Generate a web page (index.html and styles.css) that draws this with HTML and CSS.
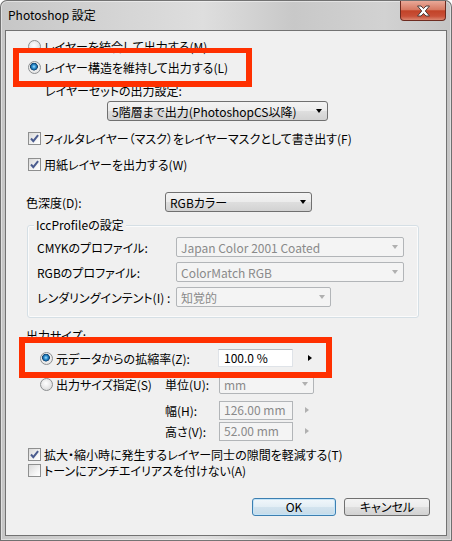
FILE: index.html
```html
<!DOCTYPE html>
<html lang="ja">
<head>
    <meta charset="UTF-8">
    <title>Photoshop 設定</title>
    <link rel="stylesheet" href="styles.css">
</head>
<body>
    <div class="window">
        <div class="titlebar">
            <span class="title">Photoshop 設定</span>
            <span class="close">
                <svg width="15" height="12" viewBox="0 0 15 12">
                    <path d="M1.5 1h3.5l2.5 2.6 2.5-2.6h3.5l-4.2 5 4.2 5h-3.5l-2.5-2.6-2.5 2.6h-3.5l4.2-5z" fill="#fff" stroke="#4a3a38" stroke-width="1"/>
                </svg>
            </span>
        </div>

        <div class="client">
            <div class="row opt"><span class="radio"></span>レイヤーを統合して出力する(M)</div>
            <div class="row opt mt1"><span class="radio on"></span>レイヤー構造を維持して出力する(L)</div>
            <div class="row set-label">レイヤーセットの出力設定:</div>
            <div class="row set-combo">
                <div class="combo w221"><span>5階層まで出力(PhotoshopCS以降)</span><i class="arrow"></i></div>
            </div>
            <div class="row opt mt7">
                <span class="check"><svg width="11" height="11" viewBox="0 0 11 11"><path d="M2 5.5l2.3 2.6 4.8-6" fill="none" stroke="#4b5c8f" stroke-width="2"/></svg></span>フィルタレイヤー（マスク）をレイヤーマスクとして書き出す(F)
            </div>
            <div class="row opt mt6">
                <span class="check"><svg width="11" height="11" viewBox="0 0 11 11"><path d="M2 5.5l2.3 2.6 4.8-6" fill="none" stroke="#4b5c8f" stroke-width="2"/></svg></span>用紙レイヤーを出力する(W)
            </div>

            <div class="row depth">
                <span class="label">色深度(D):</span>
                <div class="combo w147"><span>RGBカラー</span><i class="arrow"></i></div>
            </div>

            <div class="group">
                <span class="group-title">IccProfileの設定</span>
                <div class="row">
                    <span class="label">CMYKのプロファイル:</span>
                    <div class="combo off w228"><span>Japan Color 2001 Coated</span><i class="arrow"></i></div>
                </div>
                <div class="row mt5">
                    <span class="label">RGBのプロファイル:</span>
                    <div class="combo off w228"><span>ColorMatch RGB</span><i class="arrow"></i></div>
                </div>
                <div class="row mt5">
                    <span class="label">レンダリングインテント(I) :</span>
                    <div class="combo off w155"><span>知覚的</span><i class="arrow"></i></div>
                </div>
            </div>

            <div class="row size-label">出力サイズ:</div>
            <div class="row size mt3">
                <span class="choice wide"><span class="radio on"></span>元データからの拡縮率(Z):</span>
                <span class="field">100.0 %</span>
                <i class="spin"></i>
            </div>
            <div class="row size mt6">
                <span class="choice"><span class="radio"></span>出力サイズ指定(S)</span>
                <span class="cell-label">単位(U):</span>
                <div class="combo off w95"><span>mm</span><i class="arrow"></i></div>
            </div>
            <div class="row size mt6">
                <span class="choice"></span>
                <span class="cell-label">幅(H):</span>
                <span class="field off">126.00 mm</span>
                <i class="spin off"></i>
            </div>
            <div class="row size mt1">
                <span class="choice"></span>
                <span class="cell-label">高さ(V):</span>
                <span class="field off">52.00 mm</span>
                <i class="spin off"></i>
            </div>

            <div class="row short opt mt5">
                <span class="check"><svg width="11" height="11" viewBox="0 0 11 11"><path d="M2 5.5l2.3 2.6 4.8-6" fill="none" stroke="#4b5c8f" stroke-width="2"/></svg></span>拡大・縮小時に発生するレイヤー同士の隙間を軽減する(T)
            </div>
            <div class="row short opt">
                <span class="check"></span>トーンにアンチエイリアスを付けない(A)
            </div>

            <div class="buttons">
                <button class="btn default">OK</button>
                <button class="btn">キャンセル</button>
            </div>

            <!-- highlight frames drawn over the options -->
            <div class="mark mark-layer"></div>
            <div class="mark mark-scale"></div>
        </div>
    </div>
</body>
</html>
```

FILE: styles.css
```css
body {
    margin: 0;
    background: #fff;
    font-family: "Noto Sans CJK JP", "Noto Sans", sans-serif;
    font-size: 12px;
    color: #000;
    font-feature-settings: "palt";
}
.window {
    width: 452px;
    height: 541px;
    box-sizing: border-box;
    border-radius: 7px 7px 0 0;
    background: linear-gradient(to right, #c6c6c6, #d4d4d4 25%, #dedede 45%, #c8c8c8 65%, #d2d2d2 85%, #c4c4c4);
    box-shadow: inset 0 0 0 1px rgba(0, 0, 0, 0.5), inset 0 0 0 2px rgba(255, 255, 255, 0.45);
    overflow: hidden;
}

/* title bar */
.titlebar {
    height: 30px;
    display: flex;
    justify-content: space-between;
    align-items: flex-start;
}
.title {
    margin: 7px 0 0 8px;
    line-height: 16px;
    font-size: 12px;
}
.close {
    margin: 1px 6px 0 0;
    width: 46px;
    height: 20px;
    box-sizing: border-box;
    border: 1px solid #6d2b20;
    border-top: none;
    border-radius: 0 0 4px 4px;
    background: linear-gradient(#e9a998, #d77a63 45%, #c24328 52%, #c95038 80%, #db8670);
    display: flex;
    align-items: center;
    justify-content: center;
}

/* client area */
.client {
    position: relative;
    margin-left: 5px;
    width: 442px;
    height: 506px;
    box-sizing: border-box;
    border: 1px solid #727272;
    background: #f0f0f0;
    padding-top: 5px;
}
.row {
    display: flex;
    align-items: center;
    height: 20px;
    white-space: nowrap;
}
.row.short {
    height: 16px;
}
.mt1 { margin-top: 1px; }
.mt3 { margin-top: 3px; }
.mt5 { margin-top: 5px; }
.mt6 { margin-top: 6px; }
.mt7 { margin-top: 7px; }

.opt {
    padding-left: 22px;
}
.set-label {
    margin-top: 3px;
    padding-left: 39px;
}
.set-combo {
    margin-top: 1px;
    padding-left: 101px;
}
.depth {
    margin-top: 18px;
    padding-left: 20px;
}
.label {
    width: 139px;
    flex: none;
}

/* radio and check boxes */
.radio {
    width: 13px;
    height: 13px;
    flex: none;
    box-sizing: border-box;
    border-radius: 50%;
    border: 1px solid #8c8f91;
    background: radial-gradient(circle at 45% 40%, #fff, #e6e6e6 55%, #cfcfcf);
    margin-right: 3px;
}
.radio.on {
    background: radial-gradient(circle at 45% 42%, #a9e2ff 0, #3a9ad8 1.6px, #10619e 3px, #1a3f63 3.6px, #f0f0f0 4.2px, #d6d6d6);
}
.check {
    width: 13px;
    height: 13px;
    flex: none;
    box-sizing: border-box;
    border: 1px solid #8e8f8f;
    background: linear-gradient(135deg, #d9d9d9, #f7f7f7 70%, #fff);
    margin-right: 3px;
    display: flex;
}

/* combo boxes */
.combo {
    height: 20px;
    box-sizing: border-box;
    display: flex;
    align-items: center;
    justify-content: space-between;
    padding: 0 5px 0 4px;
    border: 1px solid #707070;
    border-radius: 3px;
    background: linear-gradient(#f3f3f3, #ececec 48%, #dedede 52%, #d2d2d2);
}
.combo .arrow {
    width: 0;
    height: 0;
    border-left: 3.5px solid transparent;
    border-right: 3.5px solid transparent;
    border-top: 4px solid #000;
}
.combo.off {
    border-color: #b2b5b8;
    border-radius: 2px;
    background: #f4f4f4;
    color: #8a8a8a;
}
.combo.off .arrow {
    border-top-color: #b0b0b0;
}
.w95 { width: 95px; height: 19px; }
.w147 { width: 147px; }
.w155 { width: 155px; }
.w221 { width: 221px; }
.w228 { width: 228px; }

/* profile group */
.group {
    position: relative;
    margin: 13px 0 0 21px;
    width: 392px;
    box-sizing: border-box;
    border: 1px solid #d5dfe5;
    border-radius: 3px;
    box-shadow: inset 0 0 0 1px #fbfbfb;
    padding: 11px 0 10px 9px;
}
.group-title {
    position: absolute;
    left: 6px;
    top: -9px;
    line-height: 16px;
    padding: 0 2px;
    background: #f0f0f0;
}

/* output size */
.size-label {
    margin-top: 7px;
    padding-left: 20px;
}
.size {
    padding-left: 34px;
}
.choice {
    width: 125px;
    flex: none;
    display: flex;
    align-items: center;
}
.choice.wide {
    width: 178px;
}
.cell-label {
    width: 54px;
    flex: none;
}
.field {
    width: 75px;
    height: 18px;
    box-sizing: border-box;
    border: 1px solid #dfe3e8;
    border-top-color: #b6bac0;
    background: #fff;
    padding-left: 5px;
    line-height: 16px;
}
.field.off {
    width: 74px;
    height: 19px;
    border-color: #b2b5b8;
    background: #f4f4f4;
    color: #8a8a8a;
    padding-left: 4px;
}
.spin {
    width: 0;
    height: 0;
    margin-left: 15px;
    border-top: 3.5px solid transparent;
    border-bottom: 3.5px solid transparent;
    border-left: 4px solid #000;
}
.spin.off {
    margin-left: 12px;
    border-left-color: #b0b0b0;
}

/* dialog buttons */
.buttons {
    margin-top: 20px;
    padding-right: 16px;
    display: flex;
    justify-content: flex-end;
    gap: 8px;
}
.btn {
    width: 86px;
    height: 18px;
    box-sizing: border-box;
    padding: 0;
    border: 1px solid #707070;
    border-radius: 3px;
    background: linear-gradient(#f3f3f3, #ececec 48%, #dedede 52%, #d2d2d2);
    font: inherit;
    line-height: 14px;
    color: #000;
}
.btn.default {
    width: 84px;
    border-color: #3c7fb1;
    box-shadow: inset 0 0 0 1px #c4e4f8;
    background: linear-gradient(#f1f7fb, #e3eef5 48%, #d2e3ee 52%, #c6dbe9);
}

/* red highlight frames */
.mark {
    position: absolute;
    box-sizing: border-box;
    border: 6px solid #ff3000;
}
.mark-layer {
    left: 7px;
    top: 17px;
    width: 239px;
    height: 39px;
    border-top-width: 5px;
}
.mark-scale {
    left: 13px;
    top: 306px;
    width: 313px;
    height: 41px;
}
```
